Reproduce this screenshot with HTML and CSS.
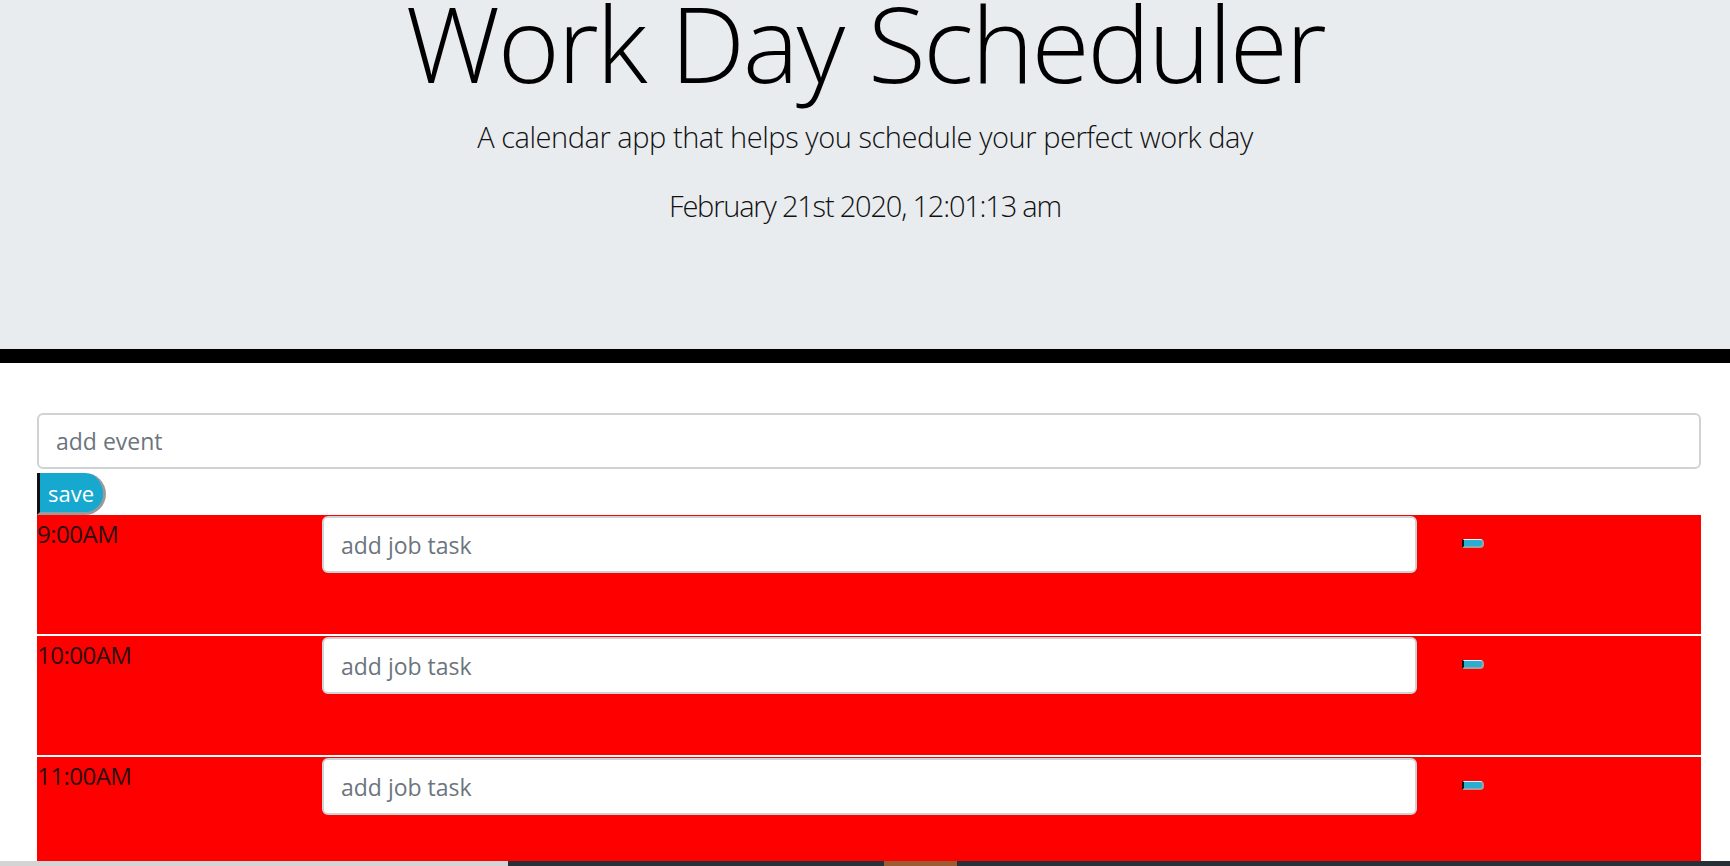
FILE: index.html
```html
<!DOCTYPE html>
<html lang="en">
<head>
<meta charset="utf-8">
<title>Work Day Scheduler</title>
<link rel="stylesheet" href="styles.css">
</head>
<body>
<header class="jumbo">
  <h1 class="title">Work Day Scheduler</h1>
  <p class="lead">A calendar app that helps you schedule your perfect work day</p>
  <p class="lead date">February 21st 2020, 12:01:13 am</p>
</header>
<main class="container">
  <input class="field event-field" type="text" placeholder="add event">
  <button class="save-btn" type="button">save</button>
  <div class="hours">
    <div class="hour-row">
      <div class="hour">9:00AM</div>
      <input class="field task-field" type="text" placeholder="add job task">
      <div class="btn-cell"><button class="mini-btn" type="button"></button></div>
    </div>
    <div class="hour-row">
      <div class="hour">10:00AM</div>
      <input class="field task-field" type="text" placeholder="add job task">
      <div class="btn-cell"><button class="mini-btn" type="button"></button></div>
    </div>
    <div class="hour-row">
      <div class="hour">11:00AM</div>
      <input class="field task-field" type="text" placeholder="add job task">
      <div class="btn-cell"><button class="mini-btn" type="button"></button></div>
    </div>
  </div>
</main>
<div class="bottom-strip">
  <span class="strip-light"></span>
  <span class="strip-dark"></span>
  <span class="strip-orange"></span>
  <span class="strip-dark2"></span>
</div>
</body>
</html>
```

FILE: styles.css
```css
html, body {
  margin: 0;
  padding: 0;
  background: #ffffff;
  overflow: hidden;
}
body {
  font-family: "Open Sans", "Noto Sans", sans-serif;
  color: #212529;
  height: 866px;
}
.jumbo {
  background: #e9ecef;
  height: 349px;
  border-bottom: 14px solid #000;
  text-align: center;
  box-sizing: content-box;
  overflow: hidden;
}
.title {
  margin: 0;
  font-weight: 300;
  font-size: 106px;
  line-height: 84px;
  letter-spacing: -2.4px;
  color: #000;
}
.lead {
  margin: 30px 0 0;
  font-weight: 300;
  font-size: 29px;
  line-height: 45px;
  letter-spacing: -0.45px;
  color: #111;
}
.lead.date {
  margin-top: 24px;
  letter-spacing: -1.2px;
}
.container {
  margin-left: 37px;
  width: 1664px;
  padding-top: 50px;
  display: flex;
  flex-direction: column;
  align-items: flex-start;
}
.field {
  box-sizing: border-box;
  font-family: "Open Sans", "Noto Sans", sans-serif;
  font-size: 23px;
  color: #495057;
  background: #fff;
  border: 2px solid #d0d3d6;
  border-radius: 6px;
  padding: 0 17px;
  outline: none;
}
.field::placeholder {
  color: #6c757d;
}
.event-field {
  width: 1664px;
  height: 56px;
}
.save-btn {
  margin-top: 4px;
  width: 69px;
  height: 42px;
  box-sizing: border-box;
  padding: 0 0 0 8px;
  text-align: left;
  background: #17a8cf;
  color: #fff;
  font-family: "Open Sans", "Noto Sans", sans-serif;
  font-size: 22px;
  border: none;
  border-left: 3px solid #111;
  border-right: 3px solid #9a9a9a;
  border-bottom: 3px solid #9a9a9a;
  border-radius: 0 21px 21px 0;
}
.hours {
  margin-top: 0;
  width: 1664px;
  display: flex;
  flex-direction: column;
  gap: 2px;
}
.hour-row {
  height: 119px;
  background: #ff0000;
  display: grid;
  grid-template-columns: 285px 1095px 1fr;
  align-items: start;
}
.hour {
  margin-top: 1px;
  font-size: 24px;
  line-height: 36px;
  letter-spacing: -0.5px;
  color: #2a1010;
}
.task-field {
  margin-top: 1px;
  width: 1095px;
  height: 57px;
}
.btn-cell {
  padding: 24px 0 0 45px;
}
.mini-btn {
  display: block;
  width: 22px;
  height: 9px;
  padding: 0;
  box-sizing: border-box;
  background: #2aaed0;
  border: none;
  border-left: 2px solid #111;
  border-right: 2px solid #a0a0a0;
  border-bottom: 2px solid #a0a0a0;
  border-top: 1px solid #e0f4fa;
  border-radius: 0 4px 4px 0;
}
.bottom-strip {
  position: fixed;
  left: 0;
  right: 0;
  bottom: 0;
  height: 5px;
  display: flex;
}
.strip-light {
  width: 508px;
  background: #d4d4d4;
}
.strip-dark {
  width: 376px;
  background: #263036;
}
.strip-orange {
  width: 73px;
  background: #9a5c33;
}
.strip-dark2 {
  flex: 1;
  background: #263036;
}
```
